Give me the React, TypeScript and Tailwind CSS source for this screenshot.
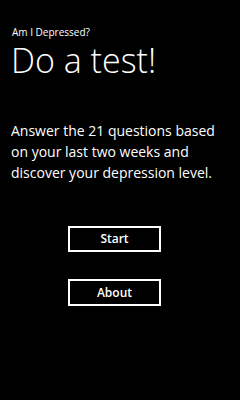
import React from 'react';

const App: React.FC = () => {
  return (
    <div className="w-[240px] h-[400px] bg-black text-white font-['Open_Sans',sans-serif] overflow-hidden">
      <div className="pt-[26px] pl-[12px]">
        <p className="text-[10px] leading-[12px]">Am I Depressed?</p>
        <h1 className="mt-[5px] ml-[-1px] text-[34px] leading-[34px] font-light">Do a test!</h1>
      </div>
      <p className="mt-[43px] px-[11px] text-[14px] leading-[21px]">
        Answer the 21 questions based on your last two weeks and discover your depression level.
      </p>
      <div className="mt-[43px] ml-[68px] flex flex-col gap-[27px]">
        <button className="w-[93px] h-[26px] border-2 border-white text-[12px] font-semibold">
          Start
        </button>
        <button className="w-[93px] h-[27px] border-2 border-white text-[12px] font-semibold">
          About
        </button>
      </div>
    </div>
  );
};

export default App;
